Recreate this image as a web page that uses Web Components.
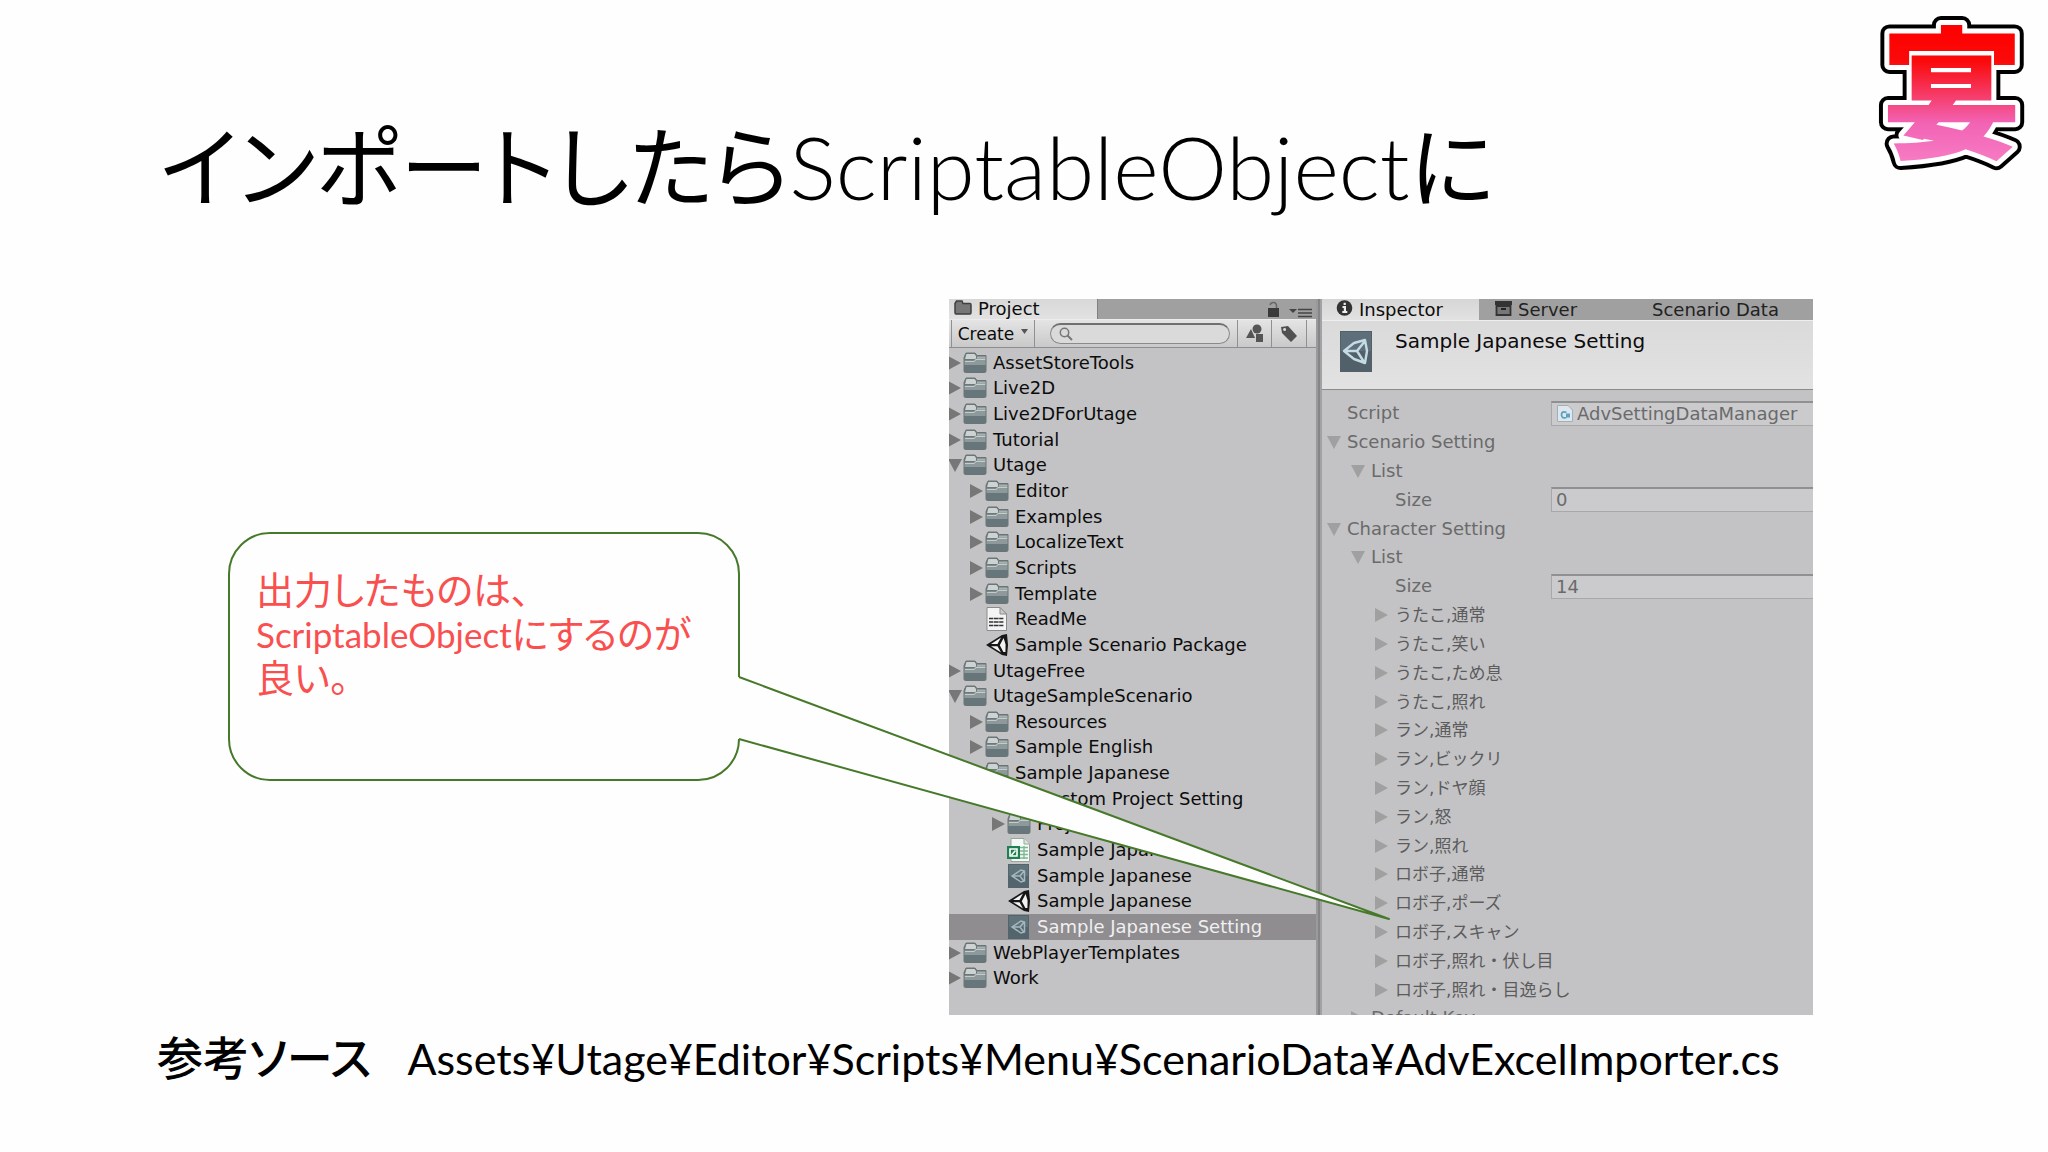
<!DOCTYPE html>
<html lang="ja">
<head>
<meta charset="utf-8">
<title>インポートしたらScriptableObjectに</title>
<style>
body { margin: 0; background: #fefefe; color: #000; }
</style>
</head>
<body>
<slide-page>
  <slide-title slot="title"><span>インポートしたら</span>ScriptableObject<span>に</span></slide-title>
  <utage-logo slot="logo"></utage-logo>
  <speech-callout slot="callout"><span>出力したものは、</span><br>ScriptableObject<span>にするのが</span><br><span>良い。</span></speech-callout>
  <unity-editor slot="figure"></unity-editor>
  <slide-note slot="note"><span>参考ソース</span>Assets¥Utage¥Editor¥Scripts¥Menu¥ScenarioData¥AdvExcelImporter.cs</slide-note>
</slide-page>

<script>
const define = (name, html, setup) => {
  const t = document.createElement('template');
  t.innerHTML = html;
  customElements.define(name, class extends HTMLElement {
    connectedCallback() {
      if (this.shadowRoot) return;
      const root = this.attachShadow({ mode: 'open' });
      root.append(t.content.cloneNode(true));
      if (setup) setup(this, root);
    }
  });
};

/* ---------- icons ---------- */
const icons = {
  folder: `<path fill="#6c7879" stroke="#6b7475" d="M1 6.5 L3 2 H12 L14 4.5 H23 V20 Q23 21.5 21.5 21.5 H2.500 Q1 21.500 1 20 Z"/>
    <path fill="#cdd3d3" d="M3.500 3 H11.500 L13 5 V8 H2 Z"/><path fill="#a9b2b3" d="M14 5.500 H22.500 V9 H14Z"/>
    <path fill="#8d999b" d="M1.500 9.500 H11 L12.500 7.500 H22.500 V14 H1.500Z"/><path fill="#66767a" d="M1.500 14 H22.500 V20 Q22.500 21 21.500 21 H2.500 Q1.500 21 1.500 20Z"/>
    <path fill="none" stroke="#c4cccc" d="M2 10.500 H11.300 L12.800 8.500 H22"/>`,
  text: `<path fill="#f4f4f4" stroke="#8b8b8b" d="M2 .5 H15 L21.500 7 V23.500 H2Z"/><path fill="#ccc" stroke="#8b8b8b" d="M15 .5 V7 H21.500Z"/>
    <path stroke="#333" stroke-width="1.6" stroke-dasharray="4 .6 5 .6 4 .6" d="M4 11.500H19M4 15H19M4 18.500H19"/>`,
  unity: `<path fill="#161616" d="M1 12 L17 2 L22 1 L23 12 L22 23 L17 22 Z"/>
    <path fill="#f2f2f2" d="M6 11 L16 4.5 L12.5 11 Z M6 13.2 L12.5 13.2 L16 19.5 Z M18.6 5 L20.6 11.6 L20.4 19 L18.4 19 L14.8 12.2 Z"/>`,
  setting: `<rect x="1" y="0" width="21" height="24" fill="#54646c"/><rect x="2" y="1" width="19" height="11" fill="#60727a"/>
    <path fill="none" stroke="#a4b8c0" stroke-width="1.500" d="M5 12 L14 6 L17.500 7 L17.500 17 L14 18 Z M5 12 H13 M13 12 L17 7 M13 12 L17 17.500"/>`,
  sheet: `<path fill="#f6faf7" stroke="#96a69b" d="M4 .5 H17 L22.500 6 V23.500 H4Z"/><path fill="#dfe5e1" stroke="#96a69b" d="M17 .5V6h5.500"/>
    <path stroke="#7fb795" stroke-width="1.400" d="M13 9.500H21M13 13H21M13 16.500H21M13 20H21M17 8V21"/>
    <rect x="0" y="8" width="13" height="13" fill="#1f8152"/><path fill="none" stroke="#fff" stroke-width="1.600" d="M3 11H10V18H3ZM4.500 17 L8.500 12.500"/>`
};

define('asset-icon', `<style>
  :host { display: block; flex: none; width: 24px; height: 24px; }
  svg { display: block; width: 100%; height: 100%; }
</style><svg viewBox="0 0 24 24" aria-hidden="true"></svg>`, (el, root) => {
  root.querySelector('svg').innerHTML = icons[el.getAttribute('name')] || '';
});

define('fold-arrow', `<style>
  :host { display: block; flex: none; width: 14px; }
  button { display: block; width: 14px; height: 14px; padding: 0; border: 0; background: none; }
  svg { display: block; width: 14px; height: 14px; }
  path { fill: var(--arrow, #777); }
</style><button type="button" aria-label="Toggle"><svg viewBox="0 0 14 14"><path/></svg></button>`, (el, root) => {
  root.querySelector('path').setAttribute('d', el.hasAttribute('open') ? 'M0 1H14L7 14Z' : 'M0 0V14L13 7Z');
});

/* ---------- slide ---------- */
define('slide-page', `<style>
  :host { display: flex; flex-direction: column; }
  header { display: flex; justify-content: space-between; align-items: flex-start; box-sizing: border-box; padding: 0 18px 0 160px; height: 299px; }
  .title { padding-top: 112px; }
  .body { display: grid; grid-template-columns: 512fr 864fr; column-gap: 209px; padding: 0 235px 0 228px; align-items: start; }
  .callout { padding-top: 233px; position: relative; z-index: 1; }
  footer { padding: 12px 157px 32px 157px; }
</style>
<header><div class="title"><slot name="title"></slot></div><slot name="logo"></slot></header>
<div class="body"><div class="callout"><slot name="callout"></slot></div><slot name="figure"></slot></div>
<footer><slot name="note"></slot></footer>`);

define('slide-title', `<style>
  :host { display: block; }
  h1 { margin: 0; font: 300 87px/110px Lato, sans-serif; white-space: nowrap; }
  ::slotted(span) { font: 400 88px/0 "Noto Sans CJK JP", sans-serif; font-feature-settings: "palt"; }
</style><h1><slot></slot></h1>`);

define('slide-note', `<style>
  :host { display: block; }
  p { margin: 0; font: 400 43px/64px Lato, sans-serif; white-space: nowrap; }
  ::slotted(span) { font: 500 46px/0 "Noto Sans CJK JP", sans-serif; font-feature-settings: "palt"; margin-right: 36px; }
</style><p><slot></slot></p>`);

define('utage-logo', `<style>
  :host { display: block; width: 154px; height: 190px; }
  svg { display: block; width: 100%; height: 100%; }
  text { font: 900 142px "Liberation Sans", "Noto Sans CJK JP", sans-serif; text-anchor: middle; }
</style>
<svg viewBox="0 0 154 190">
  <defs><linearGradient id="g" gradientUnits="userSpaceOnUse" x1="0" y1="29" x2="0" y2="163">
    <stop offset="0" stop-color="#f00"/><stop offset=".24" stop-color="#fa0a0a"/><stop offset=".7" stop-color="#f263b4"/><stop offset="1" stop-color="#f77cc4"/>
  </linearGradient></defs>
  <use href="#mark" stroke="#000" stroke-width="18" stroke-linejoin="round"/>
  <use href="#mark" fill="#fff" stroke="#fff" stroke-width="10" stroke-linejoin="round"/>
  <g fill="url(#g)"><text id="mark" x="76" y="147">宴</text></g>
</svg>`);

define('speech-callout', `<style>
  :host { display: block; position: relative; }
  .box { box-sizing: border-box; min-height: 249px; padding: 34px 26px; border: 2px solid #47792a; border-radius: 42px; background: #fefefe;
    font: 400 35px/44px Lato, sans-serif; color: #fa4f4f; white-space: nowrap; }
  ::slotted(span) { font: 400 38px/0 "Liberation Sans", "Noto Sans CJK JP", sans-serif; font-feature-settings: "palt"; }
  svg { position: absolute; left: 100%; top: 145px; width: 652px; height: 244px; margin-left: -3px; overflow: visible; }
</style>
<div class="box"><slot></slot></div>
<svg viewBox="0 0 652 244" aria-hidden="true"><path fill="#fefefe" d="M0 0 H2 L652 242 L2 62 H0Z"/><path fill="none" stroke="#47792a" stroke-width="2" stroke-linejoin="round" d="M2 0 L652 242 L2 62"/></svg>`);

/* ---------- editor window ---------- */
define('unity-editor', `<style>
  :host { display: grid; grid-template-columns: 367px 1fr; column-gap: 6px; height: 716px; overflow: hidden;
    background: linear-gradient(90deg, #9a9a9a 0 369px, #858587 369px 371px, #a2a2a4 371px); font: 18px/22px "DejaVu Sans", "Noto Sans CJK JP", sans-serif; color: #0c0c0c; }
</style><project-panel></project-panel><inspector-panel></inspector-panel>`);

define('tree-row', `<style>
  :host { display: flex; flex: 1 1 0; align-items: center; min-height: 0; white-space: nowrap; }
  :host([selected]) { background: #8f8d90; color: #f0f0f0; }
  fold-arrow { margin-left: -1px; margin-right: 1px; }
  fold-arrow[hidden] { display: block; visibility: hidden; }
  asset-icon { margin-right: 6px; }
</style><fold-arrow></fold-arrow><asset-icon></asset-icon><span><slot></slot></span>`, (el, root) => {
  el.style.paddingLeft = el.getAttribute('level') * 22 + 'px';
});

const tree = [
  [0, '>', 'folder', 'AssetStoreTools'], [0, '>', 'folder', 'Live2D'], [0, '>', 'folder', 'Live2DForUtage'], [0, '>', 'folder', 'Tutorial'],
  [0, 'v', 'folder', 'Utage'], [1, '>', 'folder', 'Editor'], [1, '>', 'folder', 'Examples'], [1, '>', 'folder', 'LocalizeText'],
  [1, '>', 'folder', 'Scripts'], [1, '>', 'folder', 'Template'], [1, '', 'text', 'ReadMe'], [1, '', 'unity', 'Sample Scenario Package'],
  [0, '>', 'folder', 'UtageFree'], [0, 'v', 'folder', 'UtageSampleScenario'], [1, '>', 'folder', 'Resources'], [1, '>', 'folder', 'Sample English'],
  [1, 'v', 'folder', 'Sample Japanese'], [2, '', 'setting', 'Custom Project Setting'], [2, '>', 'folder', 'Project'], [2, '', 'sheet', 'Sample Japanese'],
  [2, '', 'setting', 'Sample Japanese'], [2, '', 'unity', 'Sample Japanese'], [2, '', 'setting', 'Sample Japanese Setting', true],
  [0, '>', 'folder', 'WebPlayerTemplates'], [0, '>', 'folder', 'Work']
];

define('project-panel', `<style>
  :host { display: flex; flex-direction: column; min-width: 0; background: #c3c3c5; }
  .tabs { display: flex; align-items: center; height: 20px; background: #a0a0a0; }
  .tab { box-sizing: border-box; display: flex; align-items: center; gap: 6px; width: 149px; height: 20px; padding-left: 5px; background: linear-gradient(#d8d8d8, #e2e2e2); border-right: 1px solid #808080; }
  .tab svg { width: 18px; height: 15px; margin-top: -3px; }
  .tools { margin-left: auto; margin-right: 4px; width: 46px; height: 18px; }
  .bar { display: flex; align-items: stretch; box-sizing: border-box; height: 29px; border-top: 1px solid #ececec; border-bottom: 1px solid #8e8e8e; background: linear-gradient(#e4e4e4, #c9c9c9); }
  button { flex: none; box-sizing: border-box; font: inherit; color: inherit; padding: 0; background: none; border: 0; border-right: 1px solid #909090; display: flex; align-items: center; justify-content: center; }
  .create { width: 84px; margin-left: 2px; border-left: 1px solid #909090; gap: 7px; font-size: 17px; }
  .create svg { width: 7px; height: 5px; margin-top: -5px; }
  .find { flex: 1; min-width: 0; display: flex; align-items: center; gap: 2px; margin: 3px 7px 3px 15px; padding-left: 8px; border: 1px solid #8a8a8a; border-top: 2px solid #707070; border-radius: 12px; background: #dadadb; }
  .find svg { flex: none; width: 14px; height: 14px; }
  input { flex: 1; min-width: 0; height: 18px; padding: 0; border: 0; background: none; font: inherit; outline: 0; }
  .ic { width: 35px; } .ic svg { width: 20px; height: 20px; }
  .first { border-left: 1px solid #909090; } .end { flex: none; width: 9px; }
  .tree { display: flex; flex-direction: column; height: 641px; margin-top: 2px; }
</style>
<div class="tabs"><div class="tab"><svg viewBox="0 0 18 15"><path fill="#777" stroke="#3f3f3f" stroke-width="1.500" d="M1 3.500 L2.500 1H8L9 3.500H16Q17 3.500 17 5V12.500Q17 14 16 14H2Q1 14 1 12.500Z"/></svg><span>Project</span></div>
<svg class="tools" viewBox="0 0 46 18"><rect x="2" y="8" width="11" height="9" fill="#3a3a3a"/><path fill="none" stroke="#666" stroke-width="1.500" d="M4 5Q5 2 8 2.500Q11 3 10.500 8"/><path fill="#444" d="M23 9H31L27 13Z"/><path stroke="#444" stroke-width="1.600" d="M32 9.500H46M32 13H46M32 16.500H46"/></svg></div>
<div class="bar"><button class="create" type="button">Create<svg viewBox="0 0 7 5"><path fill="#555" d="M0 0H7L3.500 5Z"/></svg></button>
<label class="find"><svg viewBox="0 0 14 14"><circle cx="5.500" cy="5.500" r="4.200" fill="none" stroke="#777" stroke-width="1.500"/><path stroke="#777" stroke-width="2" d="M8.500 8.500L13 13"/></svg><input type="search" aria-label="Search"></label>
<button class="ic first" type="button" aria-label="Type"><svg viewBox="0 0 20 20"><path fill="#555" d="M1 14L6 5L10 14Z"/><circle cx="12" cy="5" r="4.500" fill="#555"/><rect x="11" y="10" width="7" height="8" fill="#555"/></svg></button>
<button class="ic" type="button" aria-label="Label"><svg viewBox="0 0 20 20"><path fill="#505050" fill-rule="evenodd" d="M2 3L9 2L18 12L12 18L3 9ZM5.500 4A1.500 1.500 0 1 0 5.600 7A1.500 1.500 0 0 0 5.500 4Z"/></svg></button><span class="end"></span></div>
<div class="tree" role="tree"></div>`, (el, root) => {
  root.querySelector('.tree').innerHTML = tree.map(([l, a, i, n, s]) => `<tree-row role="treeitem" level="${l}" arrow="${a}" icon="${i}"${s ? ' selected' : ''}>${n}</tree-row>`).join('');
  root.querySelectorAll('tree-row').forEach(r => {
    const f = document.createElement('fold-arrow'), k = document.createElement('asset-icon'), old = r.shadowRoot;
    if (r.getAttribute('arrow') === 'v') f.setAttribute('open', '');
    if (!r.getAttribute('arrow')) f.hidden = true;
    k.setAttribute('name', r.getAttribute('icon'));
    old.querySelector('fold-arrow').replaceWith(f);
    old.querySelector('asset-icon').replaceWith(k);
  });
});

define('inspector-row', `<style>
  :host { display: flex; flex: 1 1 0; min-height: 0; align-items: center; --arrow: #a0a0a1; color: #6a6a6b; white-space: nowrap; }
  .name { display: flex; align-items: center; box-sizing: border-box; width: 229px; flex: none; }
  .gap { width: 20px; flex: none; display: block; }
  .ja { font-size: 17px; color: #5c5c5d; }
  .field { flex: 1; min-width: 0; box-sizing: border-box; height: 25px; display: flex; align-items: center; padding-left: 4px; gap: 4px;
    background: #cbcbcd; border: 1px solid #a8a8a9; border-top: 2px solid #909091; border-right: 0; }
  .field svg { width: 16px; height: 17px; flex: none; margin-left: 1px; }
  input { flex: 1; min-width: 0; height: 22px; border: 0; padding: 0; background: none; font: inherit; color: inherit; outline: 0; }
</style><div class="name"><span class="gap"></span><label for="v"></label></div>`, (el, root) => {
  const name = root.querySelector('.name'), gap = root.querySelector('.gap'), label = root.querySelector('label');
  name.style.paddingLeft = 5 + 24 * el.getAttribute('level') + 'px';
  label.textContent = el.getAttribute('label');
  if (/^[^A-Z]/.test(label.textContent)) label.className = 'ja';
  const a = el.getAttribute('arrow');
  if (a) gap.innerHTML = a === 'v' ? '<fold-arrow open></fold-arrow>' : '<fold-arrow></fold-arrow>';
  const v = el.getAttribute('value');
  if (v) {
    const f = document.createElement('div');
    f.className = 'field';
    f.innerHTML = (el.hasAttribute('object') ? '<svg viewBox="0 0 16 17"><path fill="#dfe7ec" stroke="#9fb0bb" d="M.5.5H11L15.500 5V16.500H.500Z"/><path fill="none" stroke="#5ba3c4" stroke-width="1.800" d="M9.500 7.500Q4.500 5.500 4.500 10Q5 14 9.500 12.500M9 9.500H13M9 11.500H13"/></svg>' : '') + `<input id="v" readonly value="${v}">`;
    root.append(f);
  }
});

define('inspector-panel', `<style>
  :host { display: flex; flex-direction: column; min-width: 0; background: #c3c3c5; overflow: hidden; }
  .tabs { display: flex; flex: none; height: 21px; background: #a0a0a0; color: #222; line-height: 20px; }
  .tab { display: flex; align-items: center; gap: 6px; box-sizing: border-box; white-space: nowrap; }
  .on { width: 157px; padding-left: 14px; background: linear-gradient(#d6d6d6, #e2e2e2); color: #0c0c0c; }
  .srv { width: 173px; padding-left: 16px; }
  .tab svg { width: 17px; height: 16px; margin-top: -4px; }
  .head { display: flex; flex: none; box-sizing: border-box; height: 70px; padding: 10px 18px; gap: 23px; background: linear-gradient(#dadadb, #e2e2e3); border-top: 1px solid #eee; border-bottom: 1px solid #8b8b8b; }
  .head svg { width: 32px; height: 41px; }
  h2 { margin: 0; font: 400 20px/20px "DejaVu Sans", sans-serif; }
  .rows { display: flex; flex: none; flex-direction: column; height: 634px; margin-top: 9px; }
</style>
<div class="tabs"><div class="tab on"><svg viewBox="0 0 17 16"><circle cx="8.500" cy="8" r="7.800" fill="#333"/><path fill="none" stroke="#eee" stroke-width="2.200" d="M8.700 2.800V5M6.500 7H8.900V12M6.300 12H11.300"/></svg><span>Inspector</span></div>
<div class="tab srv"><svg viewBox="0 0 17 16"><path fill="#333" d="M0 1H17V5H0Z"/><path fill="#777" stroke="#333" stroke-width="1.800" d="M1.500 6H15.500V15H1.500Z"/><path stroke="#222" stroke-width="2" d="M6 9H11"/></svg><span>Server</span></div>
<div class="tab">Scenario Data</div></div>
<div class="head"><svg viewBox="0 0 32 41"><rect width="32" height="41" fill="#526069"/><rect x="1" y="1" width="30" height="19" fill="#5f6f79"/><path fill="none" stroke="#c4dbe6" stroke-width="2.400" stroke-linejoin="round" d="M4 20L14 12L25 9L27 20L25 32L14 28ZM4 20H17L25 10M17 20L24 31"/></svg><h2>Sample Japanese Setting</h2></div>
<div class="rows"></div>`, (el, root) => {
  const rows = [[0, '', 'Script', 'AdvSettingDataManager'], [0, 'v', 'Scenario Setting'], [1, 'v', 'List'], [2, '', 'Size', '0'], [0, 'v', 'Character Setting'], [1, 'v', 'List'], [2, '', 'Size', '14'],
    ...['うたこ,通常', 'うたこ,笑い', 'うたこ,ため息', 'うたこ,照れ', 'ラン,通常', 'ラン,ビックリ', 'ラン,ドヤ顔', 'ラン,怒', 'ラン,照れ', 'ロボ子,通常', 'ロボ子,ポーズ', 'ロボ子,スキャン', 'ロボ子,照れ・伏し目', 'ロボ子,照れ・目逸らし'].map(n => [2, '>', n]),
    [1, '>', 'Default Key']];
  root.querySelector('.rows').innerHTML = rows.map(([l, a, n, v]) => `<inspector-row level="${l}" arrow="${a}" label="${n}"${v ? ` value="${v}"` : ''}${n === 'Script' ? ' object' : ''}></inspector-row>`).join('');
});
</script>
</body>
</html>
